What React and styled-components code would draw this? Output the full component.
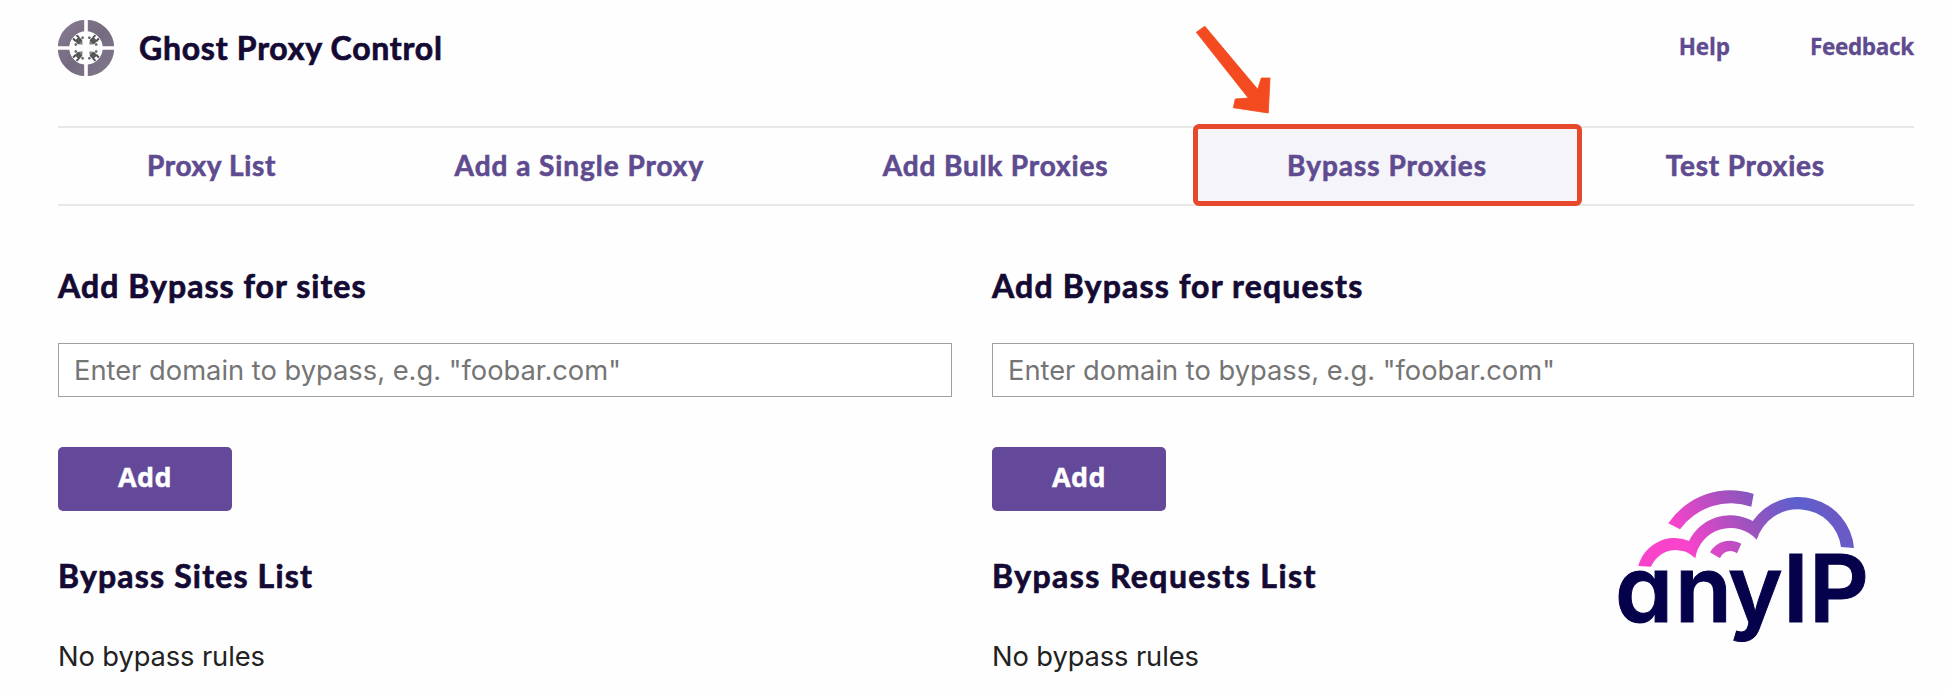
import React, { useState } from "react";
import styled, { createGlobalStyle } from "styled-components";

const GlobalStyle = createGlobalStyle`
  *, *::before, *::after {
    box-sizing: border-box;
  }
  body {
    margin: 0;
    background: #fefefe;
    color: #222;
    font-family: Inter, "Liberation Sans", sans-serif;
  }
  h1, h2, p {
    margin: 0;
  }
`;

const Page = styled.div`
  position: relative;
  width: 1946px;
  height: 690px;
  padding: 0 32px 0 58px;
  overflow: hidden;
`;

const Header = styled.header`
  display: flex;
  align-items: center;
  height: 126px;
  padding-bottom: 30px;
`;

const Title = styled.h1`
  flex: 1;
  margin-left: 23px;
  padding-bottom: 1px;
  font: 700 32px/40px Lato, sans-serif;
  letter-spacing: 0.75px;
  color: #140a33;
  -webkit-text-stroke: 0.7px #140a33;
`;

const HeaderLink = styled.a`
  margin-left: ${(props) => props.$gap || 0}px;
  padding-bottom: 2px;
  font: 700 22.5px/30px "Open Sans", sans-serif;
  letter-spacing: ${(props) => props.$track}px;
  color: #5f4b8f;
  -webkit-text-stroke: 0.3px #5f4b8f;
`;

const Tabs = styled.nav`
  display: flex;
  justify-content: space-between;
  height: 80px;
  border-top: 2px solid #e8e8e8;
  border-bottom: 2px solid #e8e8e8;
`;

const Tab = styled.a`
  position: relative;
  display: flex;
  align-items: center;
  padding: 0 89px 2px;
  white-space: nowrap;
  font: 700 28px/36px Lato, sans-serif;
  letter-spacing: ${(props) => props.$track}px;
  color: #5f4b8f;
  -webkit-text-stroke: 0.6px #5f4b8f;
`;

// marker frame drawn over the highlighted tab
const Frame = styled.span`
  position: absolute;
  inset: -4px -6px -2px -5px;
  border: 5px solid #e5482b;
  border-radius: 6px;
  background: #f5f4f8;
  z-index: 0;
`;

const TabLabel = styled.span`
  position: relative;
`;

const Arrow = styled.svg`
  position: absolute;
  left: 1190px;
  top: 20px;
`;

const Columns = styled.main`
  display: grid;
  grid-template-columns: 894px 922px;
  column-gap: 40px;
  padding-top: 60px;
`;

const Column = styled.section`
  display: flex;
  flex-direction: column;
  align-items: flex-start;
`;

const Heading = styled.h2`
  font: 700 32px/40px Lato, sans-serif;
  letter-spacing: ${(props) => props.$track}px;
  color: #140a33;
  -webkit-text-stroke: 0.7px #140a33;
`;

const DomainInput = styled.input`
  width: 100%;
  height: 54px;
  margin: 37px 0 50px;
  padding: 0 15px;
  border: 1px solid #a0a0a0;
  border-radius: 0;
  background: #fff;
  font: 400 27.3px Inter, sans-serif;
  color: #222;
  outline: none;
  &::placeholder {
    color: #757575;
    opacity: 1;
  }
`;

const AddButton = styled.button`
  width: 174px;
  height: 64px;
  margin-bottom: 45px;
  padding: 0 0 5px;
  border: none;
  border-radius: 5px;
  background: #644899;
  color: #fff;
  font: 700 27px "Open Sans", sans-serif;
  letter-spacing: 0.4px;
  -webkit-text-stroke: 0.4px #fff;
`;

const EmptyText = styled.p`
  margin-top: 43px;
  font-size: 27.3px;
  line-height: 36px;
  letter-spacing: -0.1px;
`;

const Brand = styled.svg`
  position: absolute;
  left: 1590px;
  top: 470px;
`;

const BrandText = styled.text`
  font: 600 93px Inter, sans-serif;
  font-feature-settings: "cv11";
  fill: #05014a;
  stroke: #05014a;
  stroke-width: 1px;
`;

const TABS = [
  { label: "Proxy List", track: 0.65 },
  { label: "Add a Single Proxy", track: 0.95 },
  { label: "Add Bulk Proxies", track: 0.85 },
  { label: "Bypass Proxies", track: 1 },
  { label: "Test Proxies", track: 0.82 },
];

const GhostLogo = () => (
  <svg width="58" height="58" viewBox="0 0 58 58">
    <defs>
      <linearGradient id="ring" x1="0" y1="0" x2="1" y2="1">
        <stop offset="0" stopColor="#85798f" />
        <stop offset="0.5" stopColor="#756b80" />
        <stop offset="1" stopColor="#80768b" />
      </linearGradient>
    </defs>
    <circle cx="28" cy="29" r="22.5" fill="none" stroke="url(#ring)" strokeWidth="11.5" />
    <path d="M28 0V58M0 29H57" stroke="#fefefe" strokeWidth="3.6" />
    {[45, 135, 225, 315].map((deg) => (
      <g key={deg} transform={`translate(28 29) rotate(${deg})`}>
        <path d="M-2.4 -12V-15.8M2.4 -12V-15.8" stroke="#4c4c50" strokeWidth="1.9" />
        <rect x="-3" y="-13" width="6" height="5.6" rx="1.6" fill="#55565a" />
        <path d="M-2.4 -7.2H2.4L0 -5Z" fill="#77777c" />
        <circle cx="-4.8" cy="-9.6" r="1.4" fill="#6b6b6f" />
        <circle cx="4.8" cy="-9.6" r="1.4" fill="#6b6b6f" />
      </g>
    ))}
  </svg>
);

const AnyIpLogo = () => (
  <Brand width="310" height="190" viewBox="0 0 310 190">
    <defs>
      <linearGradient id="cloud" gradientUnits="userSpaceOnUse" x1="98" y1="80" x2="215" y2="5">
        <stop offset="0" stopColor="#f943cb" />
        <stop offset="0.5" stopColor="#9853bd" />
        <stop offset="0.85" stopColor="#5b60cf" />
        <stop offset="1" stopColor="#6a5ac6" />
      </linearGradient>
    </defs>
    <g fill="url(#cloud)">
      <path d="M78.3 53.3A75 75 0 0 1 163.7 24L161.3 36.7A63 63 0 0 0 90 59.3Z" />
      <path d="M48.3 96A37.5 37.5 0 0 1 99 71A46 46 0 0 1 162.7 51A55.7 55.7 0 0 1 264 78L251 77A43.3 43.3 0 0 0 166.7 69.7A35.5 35.5 0 0 0 105.3 88.3A27 27 0 0 0 61 96.7Z" />
      <path d="M120 82.3A23 23 0 0 1 151.3 73.7L147 83.3A11 11 0 0 0 130 88.3Z" />
    </g>
    <BrandText x="25 85 138 193 219" y="152">
      anyIP
    </BrandText>
  </Brand>
);

const BypassColumn = ({ kind, track, listTitle, listTrack }) => {
  const [domain, setDomain] = useState("");
  return (
    <Column>
      <Heading $track={track}>Add Bypass for {kind}</Heading>
      <DomainInput
        value={domain}
        onChange={(e) => setDomain(e.target.value)}
        placeholder={'Enter domain to bypass, e.g. "foobar.com"'}
      />
      <AddButton>Add</AddButton>
      <Heading $track={listTrack}>{listTitle}</Heading>
      <EmptyText>No bypass rules</EmptyText>
    </Column>
  );
};

const App = () => {
  return (
    <>
      <GlobalStyle />
      <Page>
        <Header>
          <GhostLogo />
          <Title>Ghost Proxy Control</Title>
          <HeaderLink $track={-0.1}>Help</HeaderLink>
          <HeaderLink $gap={80} $track={-0.3}>
            Feedback
          </HeaderLink>
        </Header>
        <Tabs>
          {TABS.map((tab) => (
            <Tab key={tab.label} $track={tab.track}>
              {tab.label === "Bypass Proxies" && <Frame />}
              <TabLabel>{tab.label}</TabLabel>
            </Tab>
          ))}
        </Tabs>
        <Columns>
          <BypassColumn kind="sites" track={1.05} listTitle="Bypass Sites List" listTrack={1.18} />
          <BypassColumn kind="requests" track={1.18} listTitle="Bypass Requests List" listTrack={1.42} />
        </Columns>
        <Arrow width="90" height="100" viewBox="0 0 90 100">
          <path
            d="M6.3 12.3L14.8 6.2L67.7 69.3L71.3 58L80 58L78.3 93L43.3 87.7L45.3 79L58.3 78Z"
            fill="#f44a20"
            stroke="#f44a20"
            strokeWidth="0.8"
            strokeLinejoin="round"
          />
        </Arrow>
        <AnyIpLogo />
      </Page>
    </>
  );
};

export default App;
